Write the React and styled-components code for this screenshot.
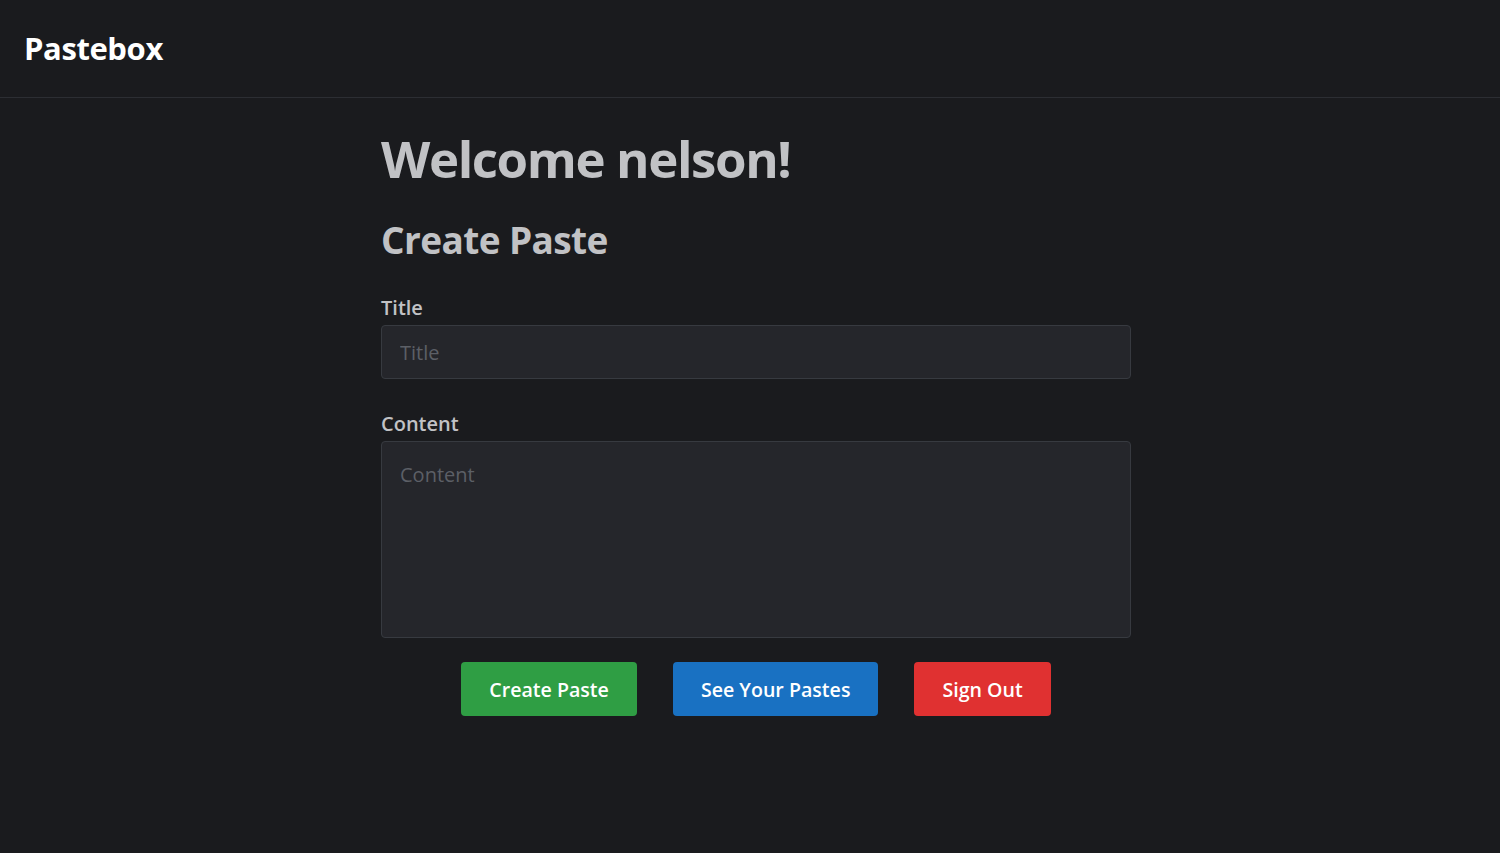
import styled, { createGlobalStyle } from "styled-components";

const GlobalStyle = createGlobalStyle`
  body {
    margin: 0;
    background: #1a1b1e;
    font-family: "Open Sans", "Noto Sans", sans-serif;
    color: #c1c2c5;
  }
`;

const Page = styled.div`
  min-height: 853px;
  background: #1a1b1e;
`;

const Header = styled.header`
  height: 98px;
  border-bottom: 1px solid #2c2e33;
  display: flex;
  align-items: center;
  padding: 0 24px;
  box-sizing: border-box;
`;

const Logo = styled.div`
  font-size: 31px;
  font-weight: 700;
  color: #ffffff;
  letter-spacing: -0.4px;
  margin-top: -2px;
`;

const Main = styled.main`
  box-sizing: border-box;
  width: 762px;
  margin: 0 auto;
  padding: 27px 0 0 12px;
`;

const Heading = styled.h1`
  margin: 0;
  font-size: 51px;
  line-height: 66px;
  font-weight: 700;
  color: #c1c2c5;
  letter-spacing: -1.4px;
`;

const SubHeading = styled.h2`
  margin: 27px 0 0;
  font-size: 37px;
  line-height: 44px;
  font-weight: 700;
  color: #c1c2c5;
  letter-spacing: -0.6px;
`;

const Form = styled.form`
  margin-top: 32px;
  display: flex;
  flex-direction: column;
`;

const Field = styled.div`
  display: flex;
  flex-direction: column;
  margin-bottom: ${(p) => p.$gap || 0}px;
`;

const Label = styled.label`
  font-size: 20px;
  line-height: 28px;
  font-weight: 600;
  color: #c1c2c5;
  margin-bottom: 3px;
`;

const inputBase = `
  box-sizing: border-box;
  width: 100%;
  background: #25262b;
  border: 1px solid #373a40;
  border-radius: 4px;
  color: #c1c2c5;
  font-family: "Open Sans", "Noto Sans", sans-serif;
  font-size: 20px;
  padding: 0 18px;
  outline: none;
  &::placeholder {
    color: #5c5f66;
  }
`;

const Input = styled.input`
  ${inputBase}
  height: 54px;
`;

const TextArea = styled.textarea`
  ${inputBase}
  height: 197px;
  padding-top: 19px;
  resize: none;
  line-height: 1.4;
`;

const Actions = styled.div`
  display: flex;
  justify-content: center;
  gap: 36px;
  margin-top: 24px;
`;

const Button = styled.button`
  height: 54px;
  padding: 0 28px;
  border: none;
  border-radius: 4px;
  background: ${(p) => p.$color};
  color: #ffffff;
  font-family: "Open Sans", "Noto Sans", sans-serif;
  font-size: 19.6px;
  font-weight: 600;
  cursor: pointer;
`;

export default function App() {
  return (
    <Page>
      <GlobalStyle />
      <Header>
        <Logo>Pastebox</Logo>
      </Header>
      <Main>
        <Heading>Welcome nelson!</Heading>
        <SubHeading>Create Paste</SubHeading>
        <Form onSubmit={(e) => e.preventDefault()}>
          <Field $gap={31}>
            <Label>Title</Label>
            <Input placeholder="Title" />
          </Field>
          <Field>
            <Label>Content</Label>
            <TextArea placeholder="Content" />
          </Field>
          <Actions>
            <Button $color="#2f9e44">Create Paste</Button>
            <Button $color="#1971c2">See Your Pastes</Button>
            <Button $color="#e03131">Sign Out</Button>
          </Actions>
        </Form>
      </Main>
    </Page>
  );
}
